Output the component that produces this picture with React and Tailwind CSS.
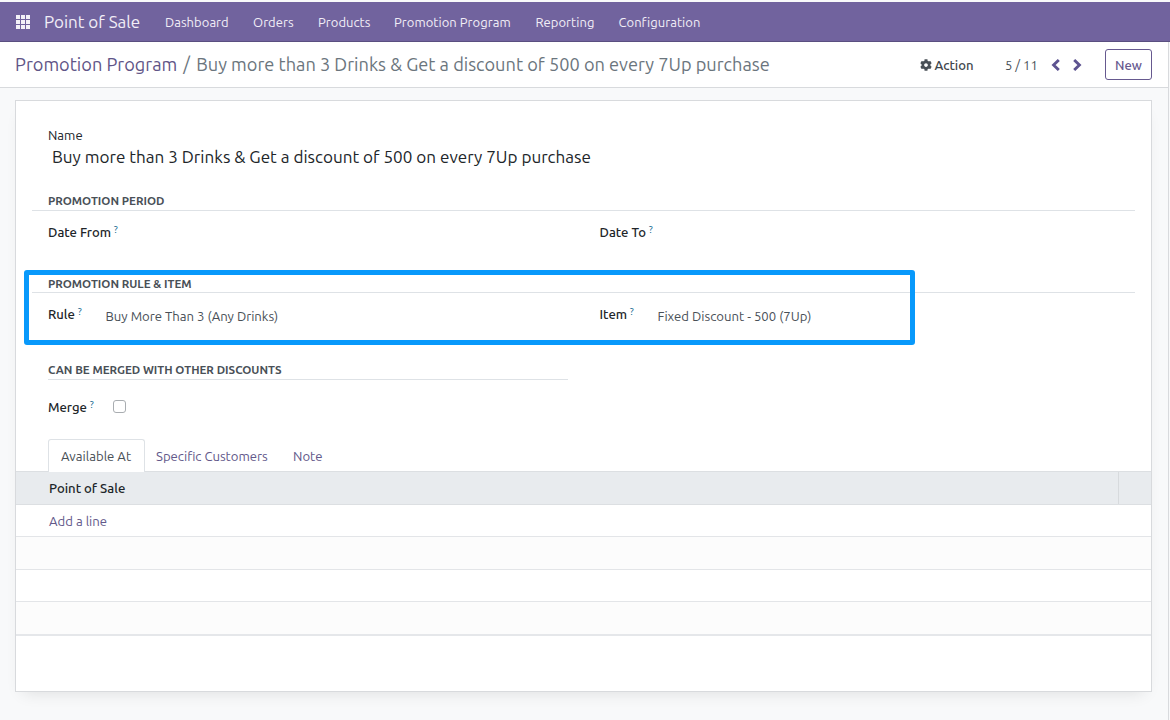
import { FaCog } from "react-icons/fa";

const menu = [
  { label: "Dashboard", width: "w-[88px]" },
  { label: "Orders", width: "w-[65px]" },
  { label: "Products", width: "w-[76px]" },
  { label: "Promotion Program", width: "w-[141.5px]" },
  { label: "Reporting", width: "w-[83px]" },
  { label: "Configuration", width: "w-[90px]" },
];

function AppsIcon() {
  return (
    <svg className="h-[14px] w-[14px]" viewBox="0 0 14 14" fill="#f3f1f8">
      {[0, 5, 10].map((y) =>
        [0, 5, 10].map((x) => <rect key={`${x}-${y}`} x={x} y={y} width="4" height="4" />)
      )}
    </svg>
  );
}

function Chevron({ flip }) {
  return (
    <svg className="h-[12px] w-[9px]" viewBox="0 0 9 12" fill="none" stroke="#5d5390" strokeWidth="2.9">
      <path d={flip ? "M1.2 1 6.4 6 1.2 11" : "M7.8 1 2.6 6l5.2 5"} />
    </svg>
  );
}

function Navbar() {
  return (
    <header className="flex h-[40px] items-center border-b border-[#5a4f80] bg-[#71639e] pl-4 text-[#f1eef7]">
      <AppsIcon />
      <span className="ml-[14px] w-[121px] text-[17px]">Point of Sale</span>
      <nav className="flex pt-[2px] text-[13px] tracking-[0.04px]">
        {menu.map((m) => (
          <span key={m.label} className={m.width}>{m.label}</span>
        ))}
      </nav>
    </header>
  );
}

function ControlPanel() {
  return (
    <div className="flex h-[46px] items-center border-b border-[#d8dadd] bg-white pl-[15px] pr-4">
      <h1 className="flex text-[18.2px] text-[#6b757d]">
        <span className="text-[#5f5587]">Promotion Program</span>
        <span className="w-[19px] pl-[6px]">/</span>
        <span>Buy more than 3 Drinks &amp; Get a discount of 500 on every 7Up purchase</span>
      </h1>
      <div className="ml-auto flex items-center text-[13px] text-[#495057]">
        <FaCog className="mr-[3px] h-[12px] w-[12px]" />
        <span className="w-[70.5px] pt-[2px] text-[13.1px] font-medium text-[#41464c]">Action</span>
        <span className="w-[46px] pt-[2px]">5 / 11</span>
        <Chevron />
        <span className="w-[13px]" />
        <Chevron flip />
        <button className="ml-[23px] h-[31px] w-[47px] rounded-[3px] border border-[#66598f] pt-[2px] font-medium text-[#66598f]">New</button>
      </div>
    </div>
  );
}

function Heading({ children, className }) {
  return (
    <h2 className={`h-[19px] border-b border-[#dee2e6] text-[11.55px] leading-[18px] font-bold text-[#495057] ${className}`}>
      {children}
    </h2>
  );
}

function Label({ children }) {
  return (
    <span className="flex text-[13.1px] leading-5 font-medium text-[#212529]">
      {children}
      <sup className="top-0 ml-[3px] text-[9.5px] leading-[15px] font-normal text-[#01618a]">?</sup>
    </span>
  );
}

function Form() {
  return (
    <div className="relative h-[338px] px-4 pt-[24px]">
      <div className="ml-4 text-[13.1px] leading-5 text-[#212529]">Name</div>
      <div className="mt-px ml-5 text-[17.1px] leading-[22px] text-[#212529]">
        Buy more than 3 Drinks &amp; Get a discount of 500 on every 7Up purchase
      </div>
      <Heading className="mt-6 pl-4">PROMOTION PERIOD</Heading>
      <div className="mt-[11px] flex h-[52px] pl-4">
        <div className="w-[551.5px]"><Label>Date From</Label></div>
        <Label>Date To</Label>
      </div>
      <Heading className="pl-4 leading-[20px]">PROMOTION RULE &amp; ITEM</Heading>
      <div className="mt-[11px] flex h-[57px] pl-4 text-[13.15px] text-[#495057]">
        <div className="w-[57.5px]"><Label>Rule</Label></div>
        <div className="w-[494px] pt-[2px] leading-5">Buy More Than 3 (Any Drinks)</div>
        <div className="w-[58px]"><Label>Item</Label></div>
        <div className="pt-[2px] leading-5">Fixed Discount - 500 (7Up)</div>
      </div>
      <Heading className="ml-4 w-[520px]">CAN BE MERGED WITH OTHER DISCOUNTS</Heading>
      <div className="mt-[17px] ml-4 flex">
        <div className="w-[65px]"><Label>Merge</Label></div>
        <span className="mt-[3px] h-[13px] w-[13px] rounded-[3px] border border-[#a9adb1] bg-white" />
      </div>
      <div className="pointer-events-none absolute top-[169px] left-[8px] h-[75px] w-[891px] rounded-[3px] border-[5px] border-[#0899fb]" />
    </div>
  );
}

function Notebook() {
  return (
    <div className="text-[13.15px]">
      <div className="relative -mb-px flex h-[33px] pl-8 text-[#62588a]">
        <span className="h-[33px] w-[97px] rounded-t-[3px] border border-b-0 border-[#dee2e6] bg-white pl-[12px] leading-[33px] text-[#495057]">Available At</span>
        <span className="w-[148px] pl-[11px] leading-[35px]">Specific Customers</span>
        <span className="leading-[35px]">Note</span>
      </div>
      <div className="flex h-[34px] border-y border-[#dcdfe2] bg-[#e8ebee] font-medium text-[#212529]">
        <span className="flex-1 pl-[33px] leading-[33px]">Point of Sale</span>
        <span className="w-[33px] border-l border-[#d7dadd]" />
      </div>
      <div className="h-[32px] border-b border-[#e3e5e8] pl-[33px] leading-[32px] text-[#62588a]">Add a line</div>
      <div className="h-[33px] border-b border-[#e3e5e8] bg-[#fcfcfc]" />
      <div className="h-[32px] border-b border-[#e3e5e8]" />
      <div className="h-[34px] border-b-2 border-[#e5e7ea] bg-[#fcfcfc]" />
    </div>
  );
}

export default function App() {
  return (
    <div className="h-[720px] w-[1170px] overflow-hidden bg-[#f8f9fa] pt-[2px] font-['Ubuntu','Noto_Sans',sans-serif] whitespace-nowrap">
      <Navbar />
      <div className="h-[678px] w-[1169px] border-r border-[#d8dadd]">
        <ControlPanel />
        <main className="pt-3 pl-[15px]">
          <div className="h-[592px] w-[1137px] border border-[#d8dadd] bg-white shadow-[0_8px_16px_-8px_rgba(0,0,0,0.12)]">
            <Form />
            <Notebook />
          </div>
        </main>
      </div>
    </div>
  );
}
